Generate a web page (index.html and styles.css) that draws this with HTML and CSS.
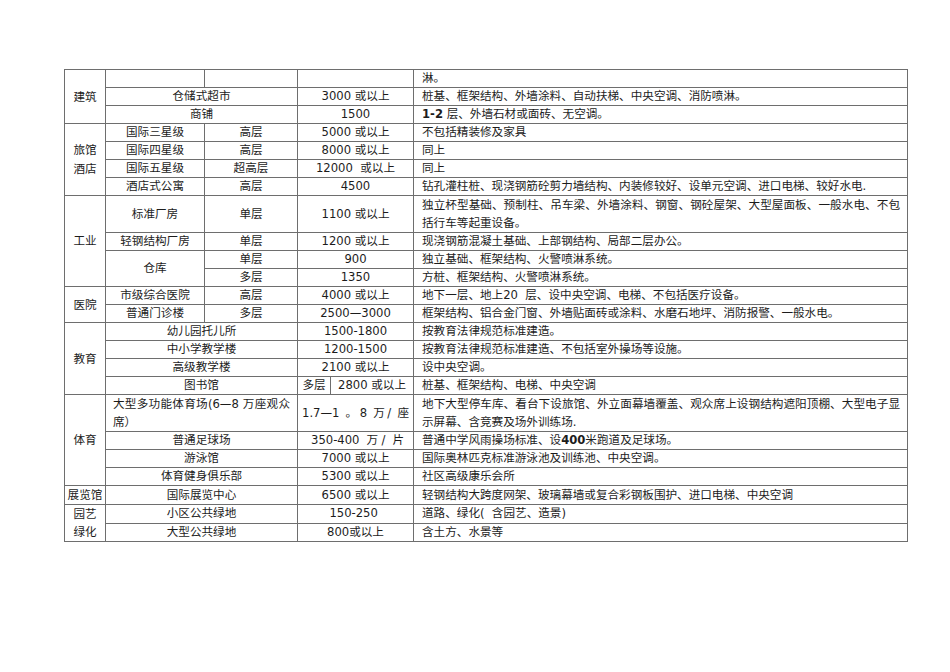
FILE: index.html
```html
<!DOCTYPE html>
<html lang="zh-CN">
<head>
<meta charset="utf-8">
<title>建筑造价参考表</title>
<link rel="stylesheet" href="styles.css">
</head>
<body>
<div class="page">
<table class="grid">
<colgroup>
<col class="c1"><col class="c2"><col class="c3"><col class="c4a"><col class="c4b"><col class="c5">
</colgroup>
<tbody>
<tr><td class="lab" rowspan="3">建筑</td><td></td><td></td><td colspan="2"></td><td class="d">淋。</td></tr>
<tr><td colspan="2">仓储式超市</td><td colspan="2">3000 或以上</td><td class="d">桩基、框架结构、外墙涂料、自动扶梯、中央空调、消防喷淋。</td></tr>
<tr><td colspan="2">商铺</td><td colspan="2">1500</td><td class="d"><b>1-2</b> 层、外墙石材或面砖、无空调。</td></tr>

<tr><td class="lab tall" rowspan="4">旅馆<br>酒店</td><td>国际三星级</td><td>高层</td><td colspan="2">5000 或以上</td><td class="d">不包括精装修及家具</td></tr>
<tr><td>国际四星级</td><td>高层</td><td colspan="2">8000 或以上</td><td class="d">同上</td></tr>
<tr><td>国际五星级</td><td>超高层</td><td colspan="2">12000&nbsp; 或以上</td><td class="d">同上</td></tr>
<tr><td>酒店式公寓</td><td>高层</td><td colspan="2">4500</td><td class="d">钻孔灌柱桩、现浇钢筋砼剪力墙结构、内装修较好、设单元空调、进口电梯、较好水电.</td></tr>

<tr><td class="lab" rowspan="4">工业</td><td>标准厂房</td><td>单层</td><td colspan="2">1100 或以上</td><td class="d wrap">独立杯型基础、预制柱、吊车梁、外墙涂料、钢窗、钢砼屋架、大型屋面板、一般水电、不包括行车等起重设备。</td></tr>
<tr><td>轻钢结构厂房</td><td>单层</td><td colspan="2">1200 或以上</td><td class="d">现浇钢筋混凝土基础、上部钢结构、局部二层办公。</td></tr>
<tr><td rowspan="2">仓库</td><td>单层</td><td colspan="2">900</td><td class="d">独立基础、框架结构、火警喷淋系统。</td></tr>
<tr><td>多层</td><td colspan="2">1350</td><td class="d">方桩、框架结构、火警喷淋系统。</td></tr>

<tr><td class="lab" rowspan="2">医院</td><td>市级综合医院</td><td>高层</td><td colspan="2">4000 或以上</td><td class="d">地下一层、地上20&nbsp; 层、设中央空调、电梯、不包括医疗设备。</td></tr>
<tr><td>普通门诊楼</td><td>多层</td><td colspan="2">2500—3000</td><td class="d">框架结构、铝合金门窗、外墙贴面砖或涂料、水磨石地坪、消防报警、一般水电。</td></tr>

<tr><td class="lab" rowspan="4">教育</td><td colspan="2">幼儿园托儿所</td><td colspan="2">1500-1800</td><td class="d">按教育法律规范标准建造。</td></tr>
<tr><td colspan="2">中小学教学楼</td><td colspan="2">1200-1500</td><td class="d">按教育法律规范标准建造、不包括室外操场等设施。</td></tr>
<tr><td colspan="2">高级教学楼</td><td colspan="2">2100 或以上</td><td class="d">设中央空调。</td></tr>
<tr><td colspan="2">图书馆</td><td class="narrow">多层</td><td class="narrow">2800 或以上</td><td class="d">桩基、框架结构、电梯、中央空调</td></tr>

<tr><td class="lab" rowspan="4">体育</td><td colspan="2" class="wrapl">大型多功能体育场(6—8 万座观众席）</td><td colspan="2" class="spread">1.7—1 。8 万/ 座</td><td class="d wrap">地下大型停车库、看台下设旅馆、外立面幕墙覆盖、观众席上设钢结构遮阳顶棚、大型电子显示屏幕、含竞赛及场外训练场.</td></tr>
<tr><td colspan="2">普通足球场</td><td colspan="2" class="spread wide">350-400 万/ 片</td><td class="d">普通中学风雨操场标准、设<b>400</b>米跑道及足球场。</td></tr>
<tr><td colspan="2">游泳馆</td><td colspan="2">7000 或以上</td><td class="d">国际奥林匹克标准游泳池及训练池、中央空调。</td></tr>
<tr><td colspan="2">体育健身俱乐部</td><td colspan="2">5300 或以上</td><td class="d">社区高级康乐会所</td></tr>

<tr><td class="lab">展览馆</td><td colspan="2">国际展览中心</td><td colspan="2">6500 或以上</td><td class="d">轻钢结构大跨度网架、玻璃幕墙或复合彩钢板围护、进口电梯、中央空调</td></tr>

<tr><td class="lab" rowspan="2">园艺<br>绿化</td><td colspan="2">小区公共绿地</td><td colspan="2">150-250&nbsp;</td><td class="d">道路、绿化(&nbsp; 含园艺、造景)</td></tr>
<tr><td colspan="2">大型公共绿地</td><td colspan="2">800或以上</td><td class="d">含土方、水景等</td></tr>
</tbody>
</table>
</div>
</body>
</html>
```

FILE: styles.css
```css
html, body {
  margin: 0;
  padding: 0;
  background: #ffffff;
}

body {
  font-family: "DejaVu Sans", "Noto Sans CJK SC", sans-serif;
  font-size: 11.6px;
  color: #1c1c1c;
}

.page {
  padding: 69px 0 0 64px;
}

.grid {
  border-collapse: collapse;
  table-layout: fixed;
  width: 843px;
}

.c1 { width: 41px; }
.c2 { width: 99px; }
.c3 { width: 93px; }
.c4a { width: 33px; }
.c4b { width: 83px; }
.c5 { width: 494px; }

.grid td {
  border: 1px solid #6e6e6e;
  padding: 0 7px;
  line-height: 17px;
  text-align: center;
  vertical-align: middle;
  overflow: hidden;
}

.grid td.lab {
  padding: 0 2px;
  line-height: 18px;
}

.grid td.tall {
  line-height: 19px;
}

.grid td.d {
  text-align: left;
  padding: 0 7px 0 8px;
}

.grid td.wrap {
  text-align: justify;
  line-height: 18px;
}

.grid td.wrapl {
  text-align: justify;
  line-height: 18px;
}

.grid td.spread {
  text-align: justify;
  text-align-last: justify;
  padding: 0 4px;
}

.grid td.spread.wide {
  padding: 0 9px 0 13px;
}

.grid td.narrow {
  padding: 0 2px;
}

.grid b {
  font-weight: bold;
}
```
